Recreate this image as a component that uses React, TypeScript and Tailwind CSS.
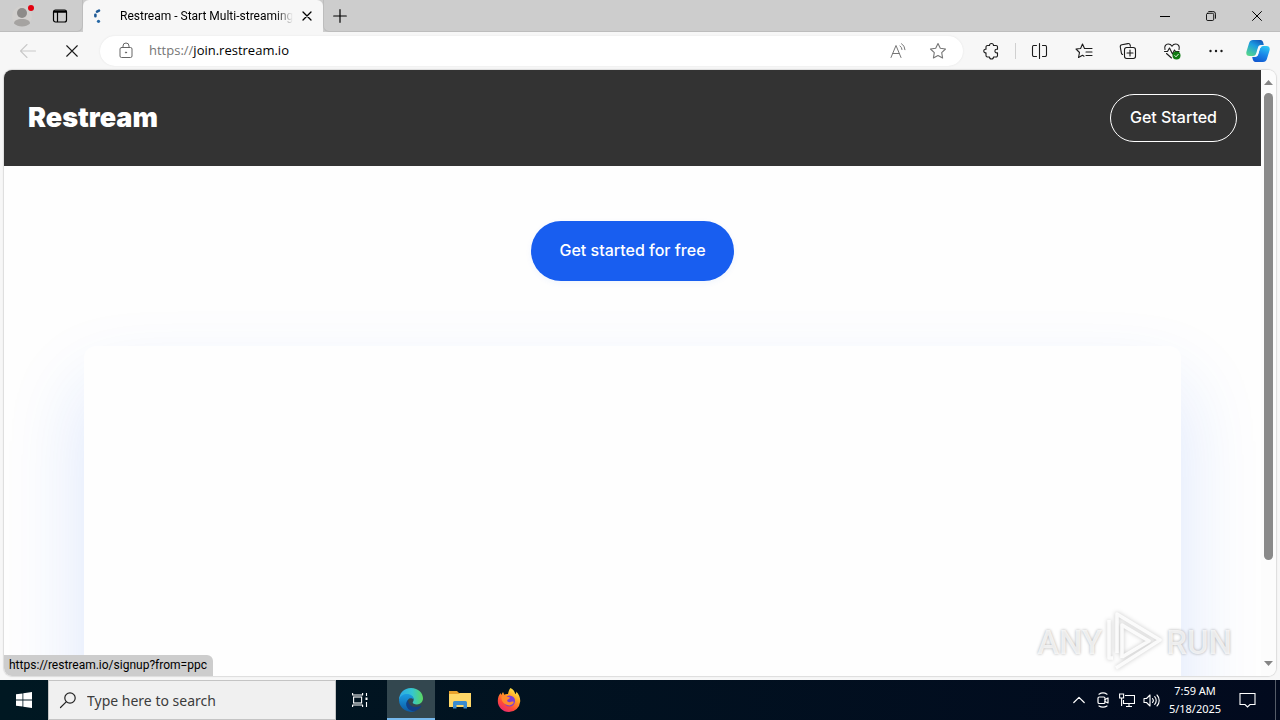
import type { ReactNode } from "react";

type IconProps = { size?: number; box?: number; className?: string; width?: number; children: ReactNode };

function Icon({ size = 20, box = 20, className = "", width = 1, children }: IconProps) {
  return (
    <svg
      width={size}
      height={size}
      viewBox={`0 0 ${box} ${box}`}
      fill="none"
      stroke="currentColor"
      strokeWidth={width}
      strokeLinecap="round"
      strokeLinejoin="round"
      className={`shrink-0 ${className}`}
      aria-hidden="true"
    >
      {children}
    </svg>
  );
}

function IconButton({ label, className = "", children }: { label: string; className?: string; children: ReactNode }) {
  return (
    <button type="button" aria-label={label} className={`flex h-full shrink-0 items-center justify-center ${className}`}>
      {children}
    </button>
  );
}

function TabStrip() {
  return (
    <div className="flex h-8 shrink-0 items-stretch bg-[#cdcdcd] text-black">
      <div className="flex w-[83px] shrink-0 items-center rounded-br-md border-r border-b border-[#bdbdbd]">
        <IconButton label="Profile" className="w-11">
          <svg width="26" height="26" viewBox="0 0 26 26" aria-hidden="true">
            <circle cx="13" cy="13" r="10" fill="#d2d0ce" />
            <circle cx="13" cy="10" r="5" fill="#8d8b89" />
            <path d="M5 20.500c0-3 3-4.500 8-4.500s8 1.500 8 4.500c-2 2-5 2.900-8 2.900s-6-.9-8-2.900z" fill="#a5a3a1" />
            <circle cx="22" cy="5" r="3" fill="#e3000f" />
          </svg>
        </IconButton>
        <IconButton label="Tab actions" className="w-8">
          <Icon size={16} box={16} width={1.2}>
            <rect x="1.500" y="2" width="13" height="12" rx="2" />
            <path d="M2 4h12M5.500 4v9.500" />
            <path d="M2.500 3.500h11" strokeWidth="2" />
          </Icon>
        </IconButton>
      </div>
      <div className="flex w-60 shrink-0 items-center rounded-t-md bg-[#f7f7f7] pl-2">
        <svg width="16" height="16" viewBox="0 0 16 16" className="shrink-0" aria-hidden="true">
          <path d="M8 2.600L6 3.600M4.400 6.700L4.400 8.300" stroke="#1f5a96" strokeWidth="2.600" strokeLinecap="round" />
          <circle cx="7.500" cy="13.300" r="1.600" fill="#2568a6" />
        </svg>
        <span className="ml-3 w-[174px] mask-r-from-90% pl-px font-['Roboto','Noto_Sans',sans-serif] text-xs whitespace-nowrap">
          Restream - Start Multi-streaming
        </span>
        <IconButton label="Close tab" className="w-[26px] pl-0.5">
          <Icon size={10} box={10} width={1.3}>
            <path d="M1 1l8 8M9 1l-8 8" />
          </Icon>
        </IconButton>
      </div>
      <div className="flex min-w-0 grow items-center rounded-bl-md border-b border-l border-[#bdbdbd]">
        <IconButton label="New tab" className="w-8">
          <Icon size={14} box={14} width={1.2}>
            <path d="M7 .7v12.600M.7 7h12.600" />
          </Icon>
        </IconButton>
        <div className="ml-auto flex h-full">
          <IconButton label="Minimize" className="w-[46px]">
            <Icon size={10} box={10}>
              <path d="M0 5.500h10" />
            </Icon>
          </IconButton>
          <IconButton label="Restore" className="w-[46px]">
            <Icon size={10} box={11}>
              <rect x=".5" y="2.500" width="8" height="8" rx="1.500" />
              <path d="M3 .5h4.500a3 3 0 0 1 3 3V8" />
            </Icon>
          </IconButton>
          <IconButton label="Close" className="w-[46px]">
            <Icon size={10} box={11} width={1.1}>
              <path d="M.6.6l9.800 9.800M10.400.6L.6 10.400" />
            </Icon>
          </IconButton>
        </div>
      </div>
    </div>
  );
}

function Toolbar() {
  return (
    <div className="flex h-[38px] shrink-0 items-center bg-[#f7f7f7] pr-0.5 pl-1.5 text-[#1b1b1b]">
      <IconButton label="Back" className="w-11 text-[#c9c9c9]">
        <Icon size={18} box={18} width={1.1}>
          <path d="M16.500 9h-15M8 2.500L1.500 9 8 15.500" />
        </Icon>
      </IconButton>
      <IconButton label="Stop loading" className="mr-1.5 w-11">
        <Icon size={12} box={13} width={1.2}>
          <path d="M.8.8l11.400 11.400M12.200.8L.8 12.200" />
        </Icon>
      </IconButton>
      <div className="flex h-[30px] min-w-0 grow items-center rounded-full bg-white pr-[5px] pl-4 shadow-[0_0_2px_#e2e2e2]">
        <Icon size={20} className="text-[#666666]">
          <path d="M5.500 6.500h9A1.500 1.500 0 0 1 16 8v7a1.500 1.500 0 0 1-1.500 1.500h-9A1.500 1.500 0 0 1 4 15V8a1.500 1.500 0 0 1 1.500-1.500z" />
          <path d="M7 6.500V5a3 3 0 0 1 6 0v1.500" />
          <circle cx="10" cy="11.500" r=".6" fill="currentColor" />
        </Icon>
        <label className="relative ml-3 flex h-full min-w-0 grow items-center pl-px font-['Open_Sans','Noto_Sans',sans-serif] text-[13px]">
          <span className="whitespace-nowrap text-[#767676]">
            https://<span className="text-black">join.restream.io</span>
          </span>
          <input aria-label="Address" className="absolute inset-0 bg-transparent outline-none" />
        </label>
        <IconButton label="Read aloud" className="w-10 text-[#767676]">
          <Icon size={18} box={18}>
            <path d="M2 15.500L7 3.500l5 12M3.700 11.500h6.600" />
            <path d="M11 4a4 4 0 0 1 2 3.500M12.500 1.700a7 7 0 0 1 3.500 6" />
          </Icon>
        </IconButton>
        <IconButton label="Add to favorites" className="w-10 text-[#767676]">
          <Icon size={18} box={18} width={1.1}>
            <path d="M9 1.500l2.300 4.800 5.200.7-3.800 3.700.9 5.300L9 13.500 4.400 16l.9-5.300L1.500 7l5.200-.7z" />
          </Icon>
        </IconButton>
      </div>
      <IconButton label="Extensions" className="ml-1.5 w-11">
        <Icon size={18} box={18} width={1.1}>
          <path d="M5.500 3.500H7.500a2 2 0 0 1 4 0h2.500a1.500 1.500 0 0 1 1.500 1.500v2.300h-.8a1.800 1.800 0 0 0 0 3.600h.8v2.600a1.500 1.500 0 0 1-1.500 1.500h-2.500a2 2 0 0 1-4 0H5.500A1.500 1.500 0 0 1 4 13.500v-2.600h-.8a1.900 1.900 0 0 1 0-3.700H4V5a1.500 1.500 0 0 1 1.500-1.500z" />
        </Icon>
      </IconButton>
      <span className="mx-0.5 h-4 w-px shrink-0 bg-[#d0d0d0]" />
      <IconButton label="Split screen" className="w-11">
        <Icon size={18} box={18} width={1.1}>
          <path d="M8.500 1.500v15M5.500 3.500h-3A1.500 1.500 0 0 0 1.500 5v8a1.500 1.500 0 0 0 1 1.500h3M11.500 3.500h3A1.500 1.500 0 0 1 15.500 5v8a1.500 1.500 0 0 1-1 1.500h-3" />
        </Icon>
      </IconButton>
      <IconButton label="Favorites" className="w-11">
        <Icon size={18} box={18} width={1.1}>
          <path d="M9.500 6.500L7.500 2 5.600 6.500 1 7l3.500 3.500-1 5 4-2.200 1.500.9M9.500 6.500h7.500M11 10h6M11 13.500h6" />
        </Icon>
      </IconButton>
      <IconButton label="Collections" className="w-11">
        <Icon size={18} box={18} width={1.1}>
          <path d="M3.600 12.500A2 2 0 0 1 2.300 10.700L1.300 5a2 2 0 0 1 1.600-2.300l6-1.100a2 2 0 0 1 2.300 1.500l.2 1.200" />
          <rect x="5.500" y="5.500" width="11" height="11" rx="2.200" />
          <path d="M11 8v6M8 11h6" />
        </Icon>
      </IconButton>
      <IconButton label="Browser essentials" className="w-11">
        <Icon size={18} box={18} width={1.1}>
          <path d="M2 7.500C1 4.500 2.700 2 5.200 2 7 2 8.300 3 9 4.200 9.700 3 11 2 12.800 2c2.600 0 4.200 2.500 3.200 5.500M3.500 11.500L8.500 16M1.500 9.500h3L6.500 6l3 6 2-4 1 1.500H16" />
          <circle cx="13.500" cy="13.500" r="4" fill="#0f7b12" stroke="none" />
          <path d="M11.800 13.600l1.200 1.200 2.300-2.500" stroke="#fff" strokeWidth=".9" />
        </Icon>
      </IconButton>
      <IconButton label="Settings and more" className="w-11">
        <Icon size={14} box={14} width={0}>
          <circle cx="1.500" cy="7" r="1.200" fill="currentColor" />
          <circle cx="7" cy="7" r="1.200" fill="currentColor" />
          <circle cx="12.500" cy="7" r="1.200" fill="currentColor" />
        </Icon>
      </IconButton>
      <IconButton label="Copilot" className="w-10">
        <svg width="24" height="24" viewBox="0 0 24 24" aria-hidden="true">
          <defs>
            <linearGradient id="copilotLeft" x1=".8" y1="0" x2=".2" y2="1">
              <stop offset="0" stopColor="#1257b8" />
              <stop offset=".4" stopColor="#1b9ce2" />
              <stop offset="1" stopColor="#55d68c" />
            </linearGradient>
            <linearGradient id="copilotRight" x1=".7" y1="0" x2=".3" y2="1">
              <stop offset="0" stopColor="#2cc4f3" />
              <stop offset=".5" stopColor="#1a86e8" />
              <stop offset="1" stopColor="#1158d0" />
            </linearGradient>
          </defs>
          <path d="M7 1h7.500c1.500 0 2.200 1 2.700 2.500L17.800 6H15c-1.800 0-2.600 1-3.100 2.800l-1.500 5C9.700 16 8.800 17 6.800 17H3.500C.8 17-.2 15 .5 12.500l2.600-8.600C3.700 2 5 1 7 1z" fill="url(#copilotLeft)" />
          <path d="M17 23H9.500c-1.500 0-2.200-1-2.700-2.500L6.200 18H9c1.800 0 2.600-1 3.100-2.800l1.500-5C14.300 8 15.200 7 17.200 7h3.300c2.700 0 3.700 2 3 4.500l-2.600 8.600C20.300 22 19 23 17 23z" fill="url(#copilotRight)" />
          <path d="M14.300 7.500h2.200c-1.700.5-2.400 1.500-2.900 3.200l-1.300 4.500c-.4 1.300-1.200 2-2.300 2H8.500c1.400-.6 1.800-1.600 2.300-3.200l1.200-4.300c.4-1.400 1.100-2 2.300-2.200z" fill="#f7fbff" />
        </svg>
      </IconButton>
    </div>
  );
}

function Watermark() {
  return (
    <div className="pointer-events-none absolute right-11 bottom-0.5 flex items-center font-['Roboto','Liberation_Sans',sans-serif] text-[33px] leading-none font-medium text-white/75 [text-shadow:0_0_3px_rgba(0,0,0,0.32)]">
      <span>ANY</span>
      <svg width="64" height="64" viewBox="0 0 62 64" fill="none" className="drop-shadow-[0_0_2px_rgba(0,0,0,0.25)]" aria-hidden="true">
        <path d="M14 43V4l43 26-44 28M19 48V15l27 16-27 16M6 10v38h4" stroke="#fff" strokeOpacity=".85" strokeWidth="3.500" strokeLinejoin="round" />
      </svg>
      <span>RUN</span>
    </div>
  );
}

function WebPage() {
  return (
    <main className="flex min-h-0 min-w-0 grow flex-col overflow-hidden bg-[#fefefe] font-['Inter','Liberation_Sans',sans-serif]">
      <header className="flex h-24 shrink-0 items-center justify-between bg-[#333333] px-6 text-white">
        <a href="https://restream.io" className="text-[27px] leading-8 font-black">Restream</a>
        <a href="https://restream.io/signup" className="flex h-12 items-center rounded-full border border-white px-[19px] pb-0.5 text-base font-medium">
          Get Started
        </a>
      </header>
      <section className="flex grow flex-col px-20 pt-[55px]">
        <a
          href="https://restream.io/signup?from=ppc"
          className="flex h-15 items-center self-center rounded-full bg-[#185ef0] px-7 pb-0.5 text-base font-medium text-white shadow-[0_2px_6px_rgba(24,94,240,0.06)]"
        >
          Get started for free
        </a>
        <div className="mt-[65px] -mb-40 grow rounded-xl bg-[#fefefe] shadow-[0_40px_80px_rgba(24,94,240,0.15)]" />
      </section>
    </main>
  );
}

function Scrollbar() {
  return (
    <div className="flex w-[15px] shrink-0 flex-col items-center bg-[#fcfcfc] py-2 text-[#858585]" aria-hidden="true">
      <svg width="9" height="9" viewBox="0 0 9 9"><path d="M4.500 2L9 7H0z" fill="currentColor" /></svg>
      <div className="mt-1.5 w-[9px] flex-[467] rounded-full bg-[#8a8a8a]" />
      <div className="flex-[99]" />
      <svg width="9" height="9" viewBox="0 0 9 9"><path d="M4.500 7L9 2H0z" fill="currentColor" /></svg>
    </div>
  );
}

function Taskbar() {
  return (
    <footer className="flex h-10 shrink-0 items-stretch bg-linear-to-r from-[#001822] to-[#020a1e] text-white">
      <IconButton label="Start" className="w-12">
        <svg width="16" height="16" viewBox="0 0 16 16" fill="#fff" aria-hidden="true">
          <path d="M0 2.300L6.500 1.400v6.200H0zM7.300 1.300L16 0v7.600H7.300zM0 8.400h6.500v6.200L0 13.700zM7.300 8.400H16V16l-8.700-1.300z" />
        </svg>
      </IconButton>
      <label className="flex w-72 shrink-0 items-center gap-2.5 border border-[#c4c4c4] bg-[#f0f0f0] px-2.5 text-[#222222]">
        <Icon size={18} box={18} width={1.2}>
          <circle cx="11" cy="7" r="5.200" />
          <path d="M7.200 10.800L1.500 16.500" />
        </Icon>
        <input
          aria-label="Search"
          placeholder="Type here to search"
          className="min-w-0 grow bg-transparent pt-0.5 text-sm outline-none placeholder:text-[#3c3c3c]"
        />
      </label>
      <IconButton label="Task view" className="mr-[3px] w-12">
        <Icon size={16} box={16} width={1.1}>
          <path d="M.6 1v2h10V1M.6 15v-2h10v2M14.500 1v3M14.500 10v5" strokeLinecap="butt" />
          <rect x="1.600" y="5" width="8" height="6" strokeLinejoin="miter" />
          <rect x="13.500" y="5.500" width="2" height="2.500" fill="#fff" stroke="none" />
        </Icon>
      </IconButton>
      <IconButton label="Microsoft Edge" className="mr-px w-12 border-b-2 border-[#76b9ed] bg-[#33474f] pt-0.5">
        <svg width="24" height="24" viewBox="0 0 24 24" aria-hidden="true">
          <defs>
            <linearGradient id="edgeTop" x1="0" y1=".4" x2="1" y2=".4">
              <stop offset="0" stopColor="#2aa7e8" />
              <stop offset=".55" stopColor="#35c6d0" />
              <stop offset="1" stopColor="#5bd860" />
            </linearGradient>
            <linearGradient id="edgeSide" x1="0" y1="0" x2="0" y2="1">
              <stop offset="0" stopColor="#1b9de2" />
              <stop offset="1" stopColor="#0c59a4" />
            </linearGradient>
          </defs>
          <path d="M0 12C0 5.500 5 0 12 0c7.500 0 12 5.300 12 10.300 0 3.900-3 6.200-6 6.200-2.800 0-4.300-1-4.300-1.900 0-.6 1-1.300 1-3 0-2.600-2.700-4.600-6.200-4.600C4.500 7 1.500 8.700 0 12z" fill="url(#edgeTop)" />
          <path d="M0 12c.8-4.200 4.500-6 8-6 4 0 6.700 2.500 6.700 5.500-1-1-2-1.300-3-1.300C9.500 10.200 8 12.300 8 15c0 4.500 4 8 8.500 8A12 12 0 0 1 0 12z" fill="url(#edgeSide)" />
          <path d="M9 12c-2 1.500-2.500 4.500-1 7.300 1.600 3 4.700 4.400 8.300 3.700 2.700-1 4.700-2.800 5.900-4.700.3-.5-.2-.9-.7-.6-4.500 2.300-10.500 1.300-12-3-.3-.9-.5-1.800-.5-2.700z" fill="#123f86" />
        </svg>
      </IconButton>
      <IconButton label="File Explorer" className="mr-px w-12">
        <svg width="22" height="18" viewBox="0 0 22 18" aria-hidden="true">
          <path d="M0 0h8l2 2h11.500v14H0z" fill="#e9a22c" />
          <path d="M0 3h10l1-1h11v14H0z" fill="#ffd767" />
          <path d="M4 17.500V11.500A1.500 1.500 0 0 1 5.500 10h11a1.500 1.500 0 0 1 1.500 1.500v6h-3.500v-3.500h-7v3.500z" fill="#398bd0" />
        </svg>
      </IconButton>
      <IconButton label="Firefox" className="w-12">
        <svg width="24" height="24" viewBox="0 0 24 24" aria-hidden="true">
          <defs>
            <linearGradient id="foxBody" x1=".8" y1="0" x2=".2" y2="1">
              <stop offset="0" stopColor="#fff44f" />
              <stop offset=".35" stopColor="#ffa623" />
              <stop offset=".7" stopColor="#ff4a38" />
              <stop offset="1" stopColor="#e52579" />
            </linearGradient>
          </defs>
          <path d="M13.500 0c3 1.500 4.500 4 4.700 6 1-.3 1.300-1.400 1-2.500 2.700 2.500 4.300 6.500 4 10A11.400 11.400 0 0 1 12 24C5.500 24 .8 19 .8 13c0-3.300 1-6 2.800-8l.6 2L6 4l1.300 2.700c1-.5 2.200-.8 3.700-.6C11.500 4 12 1.600 13.500 0z" fill="url(#foxBody)" />
          <circle cx="12.500" cy="13" r="5.600" fill="#7d3fd2" />
          <path d="M4.500 8.500c2-1.300 4.300-1.200 6 .3l2.500.7c-.2 1.500-2 1.500-2.700 2.500-.5 1 .4 2.400 2.400 2.200 1.600-.3 2.500-1.300 4-.5.4 2.300-2.700 4.200-5.500 3.600-4.500-1-7.200-4.500-6.700-8.800z" fill="#ff8b2b" />
        </svg>
      </IconButton>
      <div className="ml-auto flex items-center">
        <IconButton label="Show hidden icons" className="w-6">
          <Icon size={12} box={12} width={1.2}><path d="M.8 8.500L6 3.300l5.200 5.200" /></Icon>
        </IconButton>
        <IconButton label="Meet now" className="w-6">
          <Icon size={16} box={16} width={1.2}>
            <rect x="3" y="5" width="7" height="6.500" rx="1.300" />
            <path d="M10 7.500l3-1.500v5l-3-1.500M4 2.200c2.500-1.600 5.500-1.600 8 0M4 14c2.500 1.500 5.500 1.500 8 0" />
          </Icon>
        </IconButton>
        <IconButton label="Network" className="w-6">
          <Icon size={16} box={16} width={1.1}>
            <path d="M6 3.500h9.500v8H4.500V8M10 11.500v3M7 14.500h6M.6 2h4v4h-4zM2.600 6v8" strokeLinecap="butt" strokeLinejoin="miter" />
          </Icon>
        </IconButton>
        <IconButton label="Volume" className="w-6">
          <Icon size={17} box={17} width={1.1}>
            <path d="M1 6.500h2.500L7 3v11l-3.500-3.500H1zM9.500 6.500a3 3 0 0 1 0 4M11.700 4.700a5.500 5.500 0 0 1 0 7.600M14 3a8 8 0 0 1 0 11" />
          </Icon>
        </IconButton>
        <time dateTime="2025-05-18T07:59" className="flex w-16 flex-col text-center text-[11px] leading-[18px]">
          <span>7:59 AM</span>
          <span>5/18/2025</span>
        </time>
        <IconButton label="Notifications" className="mr-2 w-10">
          <Icon size={17} box={17} width={1.1}>
            <path d="M1 1.500h15v11h-5L8.500 15 6 12.500H1z" strokeLinejoin="miter" />
          </Icon>
        </IconButton>
        <span className="mr-1 h-full w-px bg-[#555c68]" />
      </div>
    </footer>
  );
}

export default function App() {
  return (
    <div className="flex h-screen flex-col overflow-hidden bg-[#f7f7f7] font-['Noto_Sans','Open_Sans',sans-serif]">
      <TabStrip />
      <Toolbar />
      <div className="relative mx-1 mb-1 flex min-h-0 grow overflow-hidden rounded-lg shadow-[0_0_1px_1px_#dcdcdc]">
        <WebPage />
        <Scrollbar />
        <div className="absolute bottom-0 left-0 rounded-tr-md bg-[#cdcdcd] pr-1.5 pl-[5px] font-['Roboto','Noto_Sans',sans-serif] text-xs leading-[21px] text-black">
          https://restream.io/signup?from=ppc
        </div>
        <Watermark />
      </div>
      <Taskbar />
    </div>
  );
}
